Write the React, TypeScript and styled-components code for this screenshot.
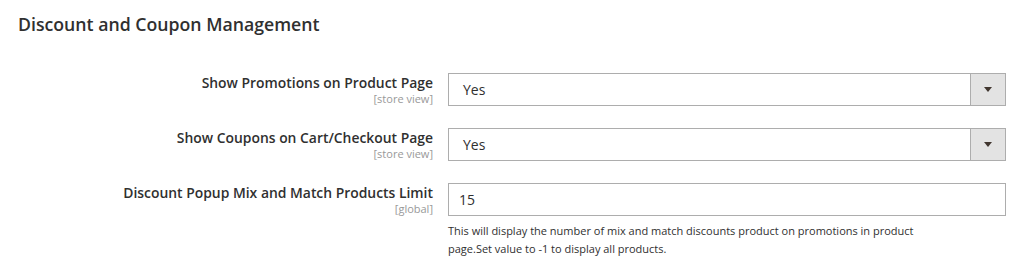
import styled, { createGlobalStyle } from 'styled-components';

const Global = createGlobalStyle`
  body {
    margin: 0;
    background: #fff;
    font-family: 'Open Sans', 'Liberation Sans', sans-serif;
    color: #303030;
  }
`;

const Section = styled.section`
  width: 1011px;
`;

const Title = styled.h2`
  margin: 0;
  padding: 12px 0 0 18px;
  font-size: 17.7px;
  font-weight: 600;
  line-height: 24px;
  color: #303030;
`;

const Fields = styled.div`
  display: flex;
  flex-direction: column;
  gap: 22px;
  padding-top: 37px;
`;

const Row = styled.div`
  display: grid;
  grid-template-columns: 433px 558px;
  column-gap: 15px;
  align-items: start;
`;

const Label = styled.div`
  text-align: right;
  padding-top: 1px;
`;

const LabelText = styled.div`
  font-size: 13.9px;
  font-weight: 600;
  line-height: 18px;
`;

const Scope = styled.div`
  font-size: 11px;
  line-height: 14px;
  color: #999;
`;

const Control = styled.div`
  display: flex;
  flex-direction: column;
`;

const Select = styled.div`
  display: flex;
  height: 33px;
  box-sizing: border-box;
  border: 1px solid #adadad;
  font-size: 14px;
`;

const SelectValue = styled.span`
  flex: 1;
  display: flex;
  align-items: center;
  padding-left: 14px;
`;

const Arrow = styled.span`
  width: 34px;
  background: #e3e3e3;
  border-left: 1px solid #adadad;
  display: flex;
  align-items: center;
  justify-content: center;
  &::after {
    content: '';
    border-left: 4px solid transparent;
    border-right: 4px solid transparent;
    border-top: 5px solid #41362f;
  }
`;

const Input = styled.div`
  height: 33px;
  box-sizing: border-box;
  border: 1px solid #adadad;
  font-size: 14px;
  display: flex;
  align-items: center;
  padding-left: 10px;
`;

const Note = styled.p`
  margin: 6px 0 0;
  max-width: 495px;
  font-size: 11px;
  line-height: 18px;
`;

type Field = {
  label: string;
  scope: string;
  kind: 'select' | 'input';
  value: string;
  note?: string;
};

const fields: Field[] = [
  { label: 'Show Promotions on Product Page', scope: '[store view]', kind: 'select', value: 'Yes' },
  { label: 'Show Coupons on Cart/Checkout Page', scope: '[store view]', kind: 'select', value: 'Yes' },
  {
    label: 'Discount Popup Mix and Match Products Limit',
    scope: '[global]',
    kind: 'input',
    value: '15',
    note: 'This will display the number of mix and match discounts product on promotions in product page.Set value to -1 to display all products.',
  },
];

export default function App() {
  return (
    <Section>
      <Global />
      <Title>Discount and Coupon Management</Title>
      <Fields>
        {fields.map((f) => (
          <Row key={f.label}>
            <Label>
              <LabelText>{f.label}</LabelText>
              <Scope>{f.scope}</Scope>
            </Label>
            <Control>
              {f.kind === 'select' ? (
                <Select>
                  <SelectValue>{f.value}</SelectValue>
                  <Arrow />
                </Select>
              ) : (
                <Input>{f.value}</Input>
              )}
              {f.note && <Note>{f.note}</Note>}
            </Control>
          </Row>
        ))}
      </Fields>
    </Section>
  );
}
